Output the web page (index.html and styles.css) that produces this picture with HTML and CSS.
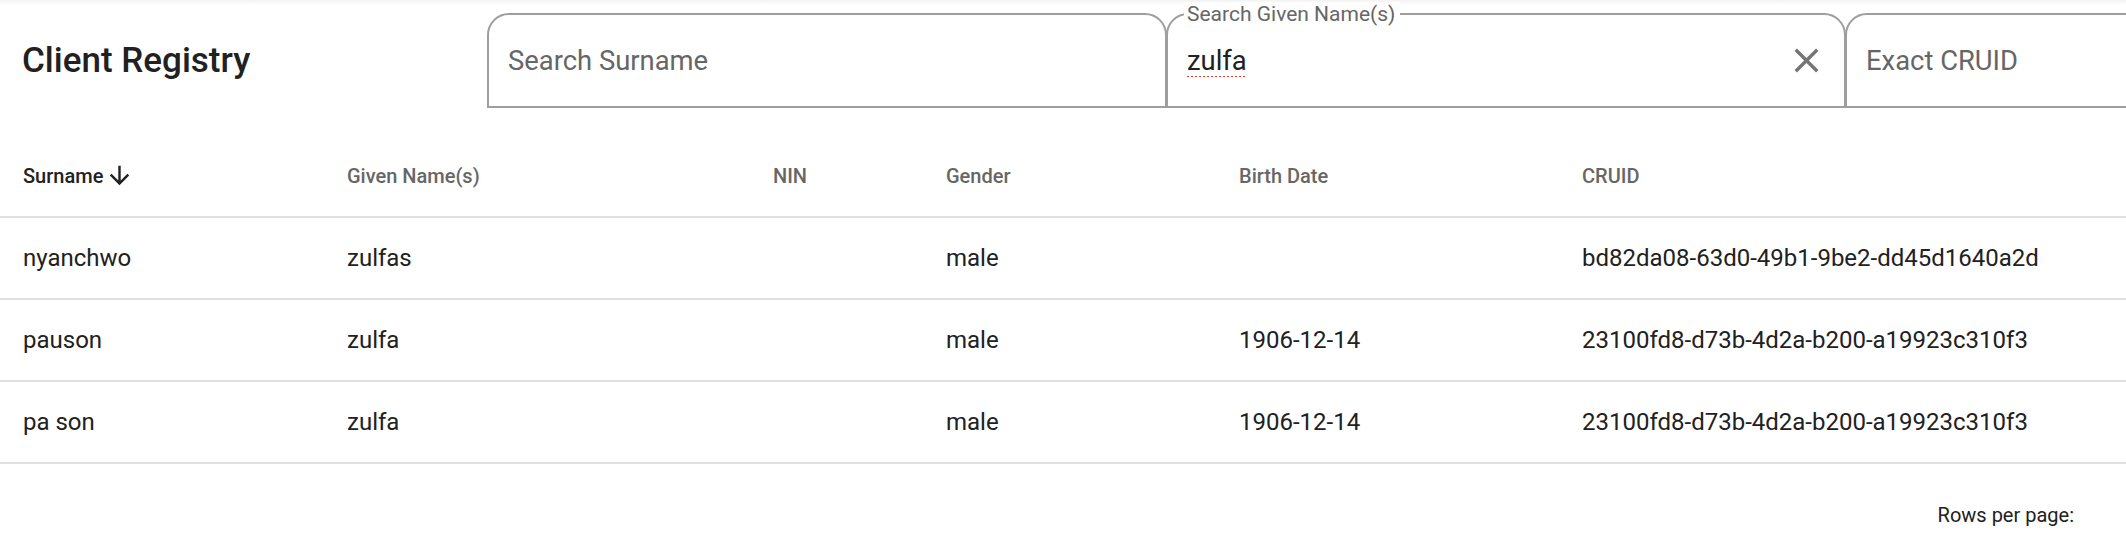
FILE: index.html
```html
<!DOCTYPE html>
<html lang="en">

<head>
  <meta charset="UTF-8" />
  <meta name="viewport" content="width=device-width, initial-scale=1" />
  <title>Client Registry</title>
  <link rel="stylesheet" href="styles.css">
</head>

<body>
  <div class="registry">
    <div class="toolbar">
      <h1 class="title">Client Registry</h1>
      <div class="filters">
        <div class="field">
          <input type="text" placeholder="Search Surname">
        </div>
        <div class="field">
          <span class="field-label">Search Given Name(s)</span>
          <input type="text" class="misspelled" value="zulfa">
          <button class="clear-button" aria-label="Clear">
            <svg viewBox="0 0 24 24" width="41" height="41">
              <path d="M19 6.41L17.59 5 12 10.59 6.41 5 5 6.41 10.59 12 5 17.59 6.41 19 12 13.41 17.59 19 19 17.59 13.41 12z" />
            </svg>
          </button>
        </div>
        <div class="field">
          <input type="text" placeholder="Exact CRUID">
        </div>
      </div>
    </div>

    <table class="clients">
      <colgroup>
        <col class="col-surname">
        <col class="col-given">
        <col class="col-nin">
        <col class="col-gender">
        <col class="col-birth">
        <col>
      </colgroup>
      <thead>
        <tr>
          <th class="sorted">
            <span class="sort-label">Surname
              <svg class="sort-icon" viewBox="0 0 24 24" width="29" height="29">
                <path d="M20 12l-1.41-1.41L13 16.17V4h-2v12.17l-5.58-5.59L4 12l8 8 8-8z" />
              </svg>
            </span>
          </th>
          <th>Given Name(s)</th>
          <th>NIN</th>
          <th>Gender</th>
          <th>Birth Date</th>
          <th>CRUID</th>
        </tr>
      </thead>
      <tbody>
        <tr>
          <td>nyanchwo</td>
          <td>zulfas</td>
          <td></td>
          <td>male</td>
          <td></td>
          <td>bd82da08-63d0-49b1-9be2-dd45d1640a2d</td>
        </tr>
        <tr>
          <td>pauson</td>
          <td>zulfa</td>
          <td></td>
          <td>male</td>
          <td>1906-12-14</td>
          <td>23100fd8-d73b-4d2a-b200-a19923c310f3</td>
        </tr>
        <tr>
          <td>pa son</td>
          <td>zulfa</td>
          <td></td>
          <td>male</td>
          <td>1906-12-14</td>
          <td>23100fd8-d73b-4d2a-b200-a19923c310f3</td>
        </tr>
      </tbody>
    </table>

    <div class="pagination">
      <span>Rows per page:</span>
    </div>
  </div>
</body>

</html>
```

FILE: styles.css
```css
* {
  box-sizing: border-box;
}

body {
  margin: 0;
  font-family: Roboto, "Liberation Sans", sans-serif;
  background-color: #fff;
  color: #212121;
  overflow: hidden;
}

.registry {
  width: 2126px;
  overflow: hidden;
}

/* cabeçalho com título e filtros */
.toolbar {
  display: flex;
  align-items: center;
  height: 121px;
  margin-bottom: 14px;
  padding-left: 22px;
  background: linear-gradient(to bottom, #f3f3f3 0, #ffffff 5px);
}

.title {
  flex: 0 0 465px;
  margin: 0;
  font-size: 35px;
  font-weight: 500;
  color: #212121;
}

.filters {
  display: flex;
  flex: none;
}

.field {
  position: relative;
  display: flex;
  align-items: center;
  width: 680px;
  height: 95px;
  padding: 0 19px;
  border: 2px solid #9e9e9e;
  border-radius: 22px 22px 0 0;
}

.field + .field {
  margin-left: -1px;
}

.field-label {
  position: absolute;
  top: -13px;
  left: 16px;
  padding: 0 5px 0 3px;
  background-color: #fff;
  font-size: 21px;
  line-height: 24px;
  color: #666;
}

.field input {
  flex: 1;
  min-width: 0;
  border: none;
  outline: none;
  padding: 0;
  background: transparent;
  font-family: inherit;
  font-size: 27.4px;
  color: #212121;
}

.field input::placeholder {
  color: #666;
  opacity: 1;
}

.field input.misspelled {
  text-decoration: underline dotted #e53935;
  text-decoration-thickness: 2px;
  text-underline-offset: 7px;
}

.clear-button {
  display: flex;
  padding: 0;
  margin-right: -2px;
  border: none;
  background: none;
  fill: #757575;
  cursor: pointer;
}

/* tabela */
table.clients {
  width: 100%;
  table-layout: fixed;
  border-collapse: separate;
  border-spacing: 0;
}

.col-surname { width: 324px; }
.col-given { width: 426px; }
.col-nin { width: 173px; }
.col-gender { width: 293px; }
.col-birth { width: 343px; }

table.clients th,
table.clients td {
  padding: 0 0 0 23px;
  text-align: left;
  border-bottom: 2px solid #e0e0e0;
  white-space: nowrap;
}

table.clients th {
  height: 83px;
  font-size: 20px;
  font-weight: 500;
  color: #666;
}

table.clients th.sorted {
  color: #212121;
}

.sort-label {
  display: inline-flex;
  align-items: center;
}

.sort-icon {
  margin-left: 2px;
  fill: #212121;
}

table.clients td {
  height: 82px;
  font-size: 24px;
  color: #212121;
}

.pagination {
  display: flex;
  justify-content: flex-end;
  align-items: center;
  height: 102px;
  padding-right: 52px;
  font-size: 20px;
  color: #212121;
}
```
